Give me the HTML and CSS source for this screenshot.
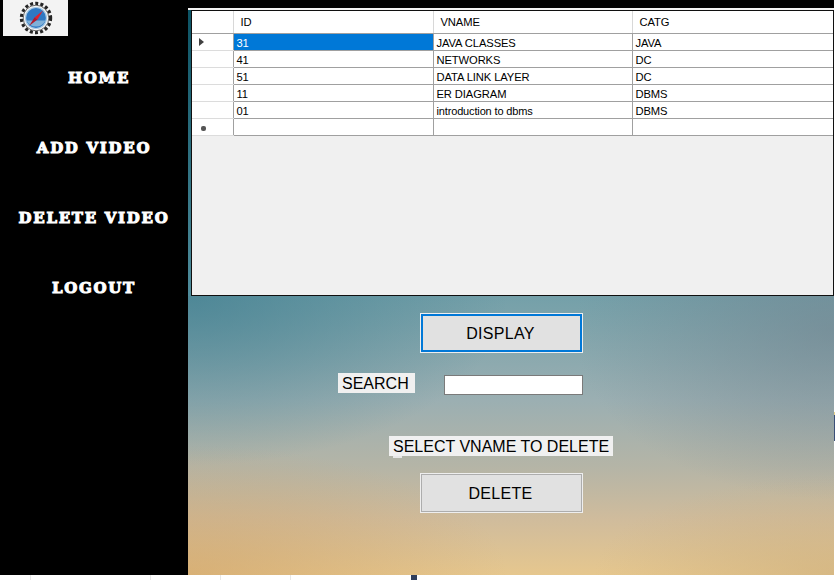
FILE: index.html
```html
<!DOCTYPE html>
<html lang="en">
<head>
<meta charset="utf-8">
<title>Delete Video</title>
<link rel="stylesheet" href="styles.css">
</head>
<body>
<div class="app">
  <aside class="sidebar">
    <div class="logo">
      <svg width="34" height="34" viewBox="0 0 34 34">
        <circle cx="17" cy="17" r="14.6" fill="none" stroke="#262626" stroke-width="3.2" stroke-dasharray="3 2.200"/>
        <circle cx="17" cy="17" r="12.8" fill="#f4f4f4" stroke="#444" stroke-width=".8"/>
        <circle cx="17" cy="17" r="10.500" fill="#2f78c2"/>
        <path d="M7.500 19.500h19a10.500 10.500 0 0 1-19 0z" fill="#7fb0d8"/>
        <circle cx="17" cy="17" r="10.500" fill="none" stroke="#a9cbe6" stroke-width="1.200"/>
        <path d="M24 9.500l-5.500 9-3-2z" fill="#e3202a"/>
        <path d="M10 25l5.500-8.500 3 2z" fill="#b01c2c"/>
      </svg>
    </div>
    <nav class="nav">
      <a class="nav-item nav-home">HOME</a>
      <a class="nav-item">ADD VIDEO</a>
      <a class="nav-item">DELETE VIDEO</a>
      <a class="nav-item">LOGOUT</a>
    </nav>
  </aside>
  <main class="main">
    <div class="topline"></div>
    <div class="panel-wrap">
      <section class="panel">
        <table class="grid">
          <colgroup>
            <col class="c-head"><col class="c-id"><col class="c-name"><col class="c-cat">
          </colgroup>
          <thead>
            <tr><th></th><th>ID</th><th>VNAME</th><th>CATG</th></tr>
          </thead>
          <tbody>
            <tr><td class="rh"><span class="arrow"></span></td><td class="sel">31</td><td>JAVA CLASSES</td><td>JAVA</td></tr>
            <tr><td class="rh"></td><td>41</td><td>NETWORKS</td><td>DC</td></tr>
            <tr><td class="rh"></td><td>51</td><td>DATA LINK LAYER</td><td>DC</td></tr>
            <tr><td class="rh"></td><td>11</td><td>ER DIAGRAM</td><td>DBMS</td></tr>
            <tr><td class="rh"></td><td>01</td><td class="narrow">introduction to dbms</td><td>DBMS</td></tr>
            <tr><td class="rh"><span class="star"></span></td><td></td><td></td><td></td></tr>
          </tbody>
        </table>
      </section>
    </div>
    <section class="controls">
      <button class="btn btn-focus">DISPLAY</button>
      <div class="search">
        <label class="lbl lbl-search">SEARCH</label>
        <input class="field" type="text">
      </div>
      <div class="lbl lbl-select">SELECT VNAME TO DELETE<span class="stub"></span></div>
      <button class="btn btn-delete">DELETE</button>
    </section>
    <span class="edge"></span>
  </main>
</div>
<footer class="strip">
  <i class="tick t1"></i><i class="tick t2"></i><i class="tick t3"></i><i class="tick t4"></i><i class="mark"></i>
</footer>
</body>
</html>
```
FILE: styles.css
```css
* { box-sizing: border-box; }
html, body { margin: 0; padding: 0; background: #fff; overflow: hidden; }
body { width: 835px; height: 580px; font-family: "Liberation Sans", Arial, sans-serif; color: #000; }

.app { display: flex; width: 834px; height: 575px; }

.sidebar { width: 188px; flex: none; background: #000; }
.logo {
  width: 65px; height: 36px; margin-left: 3px; background: #f3f3f3;
  display: flex; align-items: center; justify-content: center;
}
.nav { display: flex; flex-direction: column; align-items: center; gap: 50px; padding-top: 32px; }
.nav-item {
  height: 20px; line-height: 20px; color: #fff; white-space: nowrap;
  font-family: "DejaVu Serif", serif; font-weight: 700; font-size: 15px;
  letter-spacing: 1.700px; -webkit-text-stroke: 1px #fff;
}
.nav-home { margin-left: 10px; }

.main {
  position: relative; flex: 1; min-width: 0;
  background:
    radial-gradient(ellipse 320px 170px at 0 296px, rgba(62,125,143,.7), rgba(62,125,143,0)),
    radial-gradient(ellipse 320px 130px at 0 575px, rgba(205,158,98,.55), rgba(205,158,98,0)),
    radial-gradient(ellipse 260px 170px at 646px 330px, rgba(112,128,140,.55), rgba(112,128,140,0)),
    radial-gradient(ellipse 240px 100px at 646px 575px, rgba(205,175,125,.6), rgba(205,175,125,0)),
    linear-gradient(180deg, #74a0a9 0, #74a0a9 296px, #9bafb2 400px, #b6b5a6 470px, #d0bc9c 520px, #e6c78e 575px);
}
.topline { height: 10px; background: #000; border-bottom: 2px solid #f2f2f2; }

.panel-wrap { padding-left: 3px; background: linear-gradient(180deg, #0c5364, #4f8c9b); }
.panel {
  height: 286px; background: #f0f0f0;
  border: 1px solid #101010;
}
.grid {
  table-layout: fixed; border-collapse: collapse; width: 641px;
  font-size: 11.2px; letter-spacing: -.1px; background: #fff;
}
.c-head { width: 41px; }
.c-id { width: 200px; }
.c-name { width: 199px; }
.c-cat { width: 201px; }
.grid th, .grid td { border: 1px solid #a0a0a0; padding: 2px 0 0 3px; overflow: hidden; white-space: nowrap; }
.grid th {
  height: 22px; font-weight: 400; text-align: left; padding: 0 0 0 7px;
  border-top: 0; border-left-color: #d8d8d8; border-right-color: #d8d8d8; border-bottom-color: #a0a0a0;
}
.grid th:first-child, .grid td.rh { border-left: 0; }
.grid td { height: 17px; line-height: 14px; }
.grid td.rh { border-bottom-color: #dcdcdc; border-right-color: #a0a0a0; padding: 0; }
.grid td.sel { background: #0078d7; color: #fff; }
.grid td.narrow { font-size: 11px; letter-spacing: -.15px; }
.grid td:last-child, .grid th:last-child { border-right: 0; }
.arrow {
  display: block; width: 0; height: 0; margin: 1px 0 0 7px;
  border-left: 5px solid #404040; border-top: 4.500px solid transparent; border-bottom: 4.500px solid transparent;
}
.star { display: block; width: 5px; height: 5px; margin: 3px 0 0 9px; background: #555; border-radius: 2px; }

.controls { padding: 18px 0 0 150px; display: flex; flex-direction: column; align-items: flex-start; }
.btn {
  width: 161px; height: 38px; margin-left: 83px; padding: 1px 2px 0 0; font: 16px "Liberation Sans", Arial, sans-serif; letter-spacing: .3px; color: #000;
  background: #e1e1e1; border: 1px solid #adadad; outline: 1px solid #eee; outline-offset: 0;
}
.btn-focus { border: 2px solid #0078d7; }
.search { display: flex; align-items: flex-start; margin-top: 21px; }
.lbl { display: block; background: #f0f0f0; font-size: 16px; line-height: 19px; height: 20px; padding: 1px 0 0 4px; white-space: nowrap; }
.lbl-search { width: 77px; }
.field { width: 139px; height: 20px; margin: 2px 0 0 29px; padding: 0; background: #fff; border: 1px solid #7a7a7a; }
.lbl-select { position: relative; width: 224px; margin: 41px 0 0 51px; }
.stub { position: absolute; left: 4px; top: 20px; width: 9px; height: 2px; background: #e8e8e8; }
.btn-delete { margin-top: 18px; }
.edge { position: absolute; right: -1px; top: 412px; width: 1px; height: 29px; background: #3b4f78; border-top: 3px solid #e8d28a; }

.strip { position: relative; height: 5px; background: #fff; }
.tick { position: absolute; top: 0; width: 1px; height: 5px; background: #e8e8e8; }
.t1 { left: 30px; } .t2 { left: 150px; } .t3 { left: 220px; } .t4 { left: 290px; }
.mark { position: absolute; left: 411px; top: 0; width: 6px; height: 5px; background: #2f3e5c; }
```
